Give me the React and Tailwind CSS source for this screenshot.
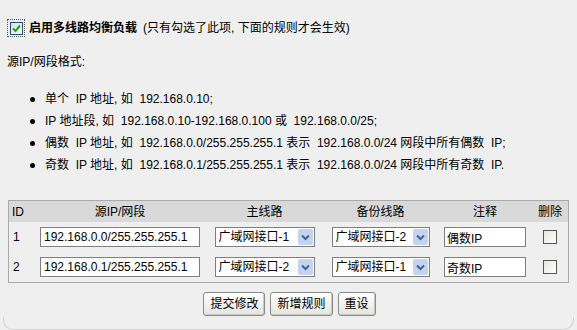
import React from "react";

const font = { fontFamily: '"Liberation Sans", "Noto Sans CJK SC", sans-serif' };

const rules = [
  { id: 1, ip: "192.168.0.0/255.255.255.1", main: "广域网接口-1", backup: "广域网接口-2", note: "偶数IP" },
  { id: 2, ip: "192.168.0.1/255.255.255.1", main: "广域网接口-2", backup: "广域网接口-1", note: "奇数IP" },
];

const tips = [
  "单个  IP 地址, 如  192.168.0.10;",
  "IP 地址段, 如  192.168.0.10-192.168.0.100 或  192.168.0.0/25;",
  "偶数  IP 地址, 如  192.168.0.0/255.255.255.1 表示  192.168.0.0/24 网段中所有偶数  IP;",
  "奇数  IP 地址, 如  192.168.0.1/255.255.255.1 表示  192.168.0.0/24 网段中所有奇数  IP.",
];

const cols = "grid grid-cols-[25px_172px_117px_115px_94px_1fr]";

const WanSelect = ({ value, width }) => (
  <div className={`relative h-[20px] ${width} border border-[#7f7f7f] bg-white`}>
    <select
      defaultValue={value}
      className="h-full w-full appearance-none bg-white pl-[3px] text-[12px] leading-[18px] text-black outline-none"
      style={font}
    >
      <option>广域网接口-1</option>
      <option>广域网接口-2</option>
    </select>
    <span className="pointer-events-none absolute right-[1px] top-[1px] flex h-[16px] w-[15px] items-center justify-center rounded-[2px] bg-[#c3d3f4]">
      <svg width="9" height="7" viewBox="0 0 9 7">
        <path d="M1 1.5 L4.5 5 L8 1.5" fill="none" stroke="#4d6185" strokeWidth="2" />
      </svg>
    </span>
  </div>
);

const Btn = ({ children }) => (
  <button
    className="h-[24px] rounded-[3px] border border-[#8a8a8a] bg-gradient-to-b from-white to-[#e4e4e0] px-[6px] text-[12px] text-black shadow-[inset_-1px_-1px_0_#c8c8c4]"
    style={font}
  >
    {children}
  </button>
);

export default function App() {
  return (
    <div className="flex h-[330px] w-[577px] flex-col overflow-hidden bg-[#efefef] text-[12px] text-black" style={font}>
      <div className="ml-[7px] mt-[19px] flex h-[18px] items-center">
        <span className="flex h-[18px] w-[18px] items-center justify-center border border-dotted border-[#555]">
          <span className="flex h-[13px] w-[13px] items-center justify-center border border-[#1c5180] bg-gradient-to-br from-[#dcdcd6] to-white">
            <svg width="9" height="9" viewBox="0 0 9 9">
              <path d="M1 4.5 L3.5 7 L8 1.5" fill="none" stroke="#21a121" strokeWidth="2" />
            </svg>
          </span>
        </span>
        <span className="ml-[4px] font-bold">启用多线路均衡负载</span>
        <span className="ml-[6px]">(只有勾选了此项, 下面的规则才会生效)</span>
      </div>

      <div className="ml-[7px] mt-[17px] leading-[16px]">源IP/网段格式:</div>

      <ul className="mt-[18px]">
        {tips.map((t) => (
          <li key={t} className="flex h-[22px] items-center whitespace-pre">
            <span className="ml-[30px] mr-[10px] h-[5px] w-[5px] rounded-full bg-black" />
            {t}
          </li>
        ))}
      </ul>

      <div className="mx-[8px] mt-[24px] border border-[#a9a9a9]">
        <div className={`${cols} h-[21px] items-center bg-[#d9d9d9]`}>
          <span className="pl-[3px]">ID</span>
          <span className="text-center">源IP/网段</span>
          <span className="text-center">主线路</span>
          <span className="text-center">备份线路</span>
          <span className="text-center">注释</span>
          <span className="text-center">删除</span>
        </div>
        {rules.map((r) => (
          <div key={r.id} className={`${cols} h-[30px] items-center`}>
            <span className="pl-[4px]">{r.id}</span>
            <div className="flex justify-center">
              <input
                defaultValue={r.ip}
                className="h-[20px] w-[160px] border border-[#7f7f7f] bg-white px-[3px] text-[12px] outline-none"
                style={font}
              />
            </div>
            <div className="flex justify-center">
              <WanSelect value={r.main} width="w-[100px]" />
            </div>
            <div className="flex justify-center">
              <WanSelect value={r.backup} width="w-[98px]" />
            </div>
            <div className="flex justify-center">
              <input
                defaultValue={r.note}
                className="h-[20px] w-[82px] border border-[#7f7f7f] bg-white px-[2px] text-[12px] outline-none"
                style={font}
              />
            </div>
            <div className="flex justify-center">
              <span className="h-[14px] w-[14px] border border-[#555] bg-gradient-to-br from-[#e6e6e2] to-white" />
            </div>
          </div>
        ))}
      </div>

      <div className="mt-[9px] flex justify-center gap-[5px] pl-[2px]">
        <Btn>提交修改</Btn>
        <Btn>新增规则</Btn>
        <Btn>重设</Btn>
      </div>

      <div className="mx-[3px] mt-[1px] h-[13px] rounded-b-[10px] border-x border-b border-[#d2d2d2]" />
    </div>
  );
}
